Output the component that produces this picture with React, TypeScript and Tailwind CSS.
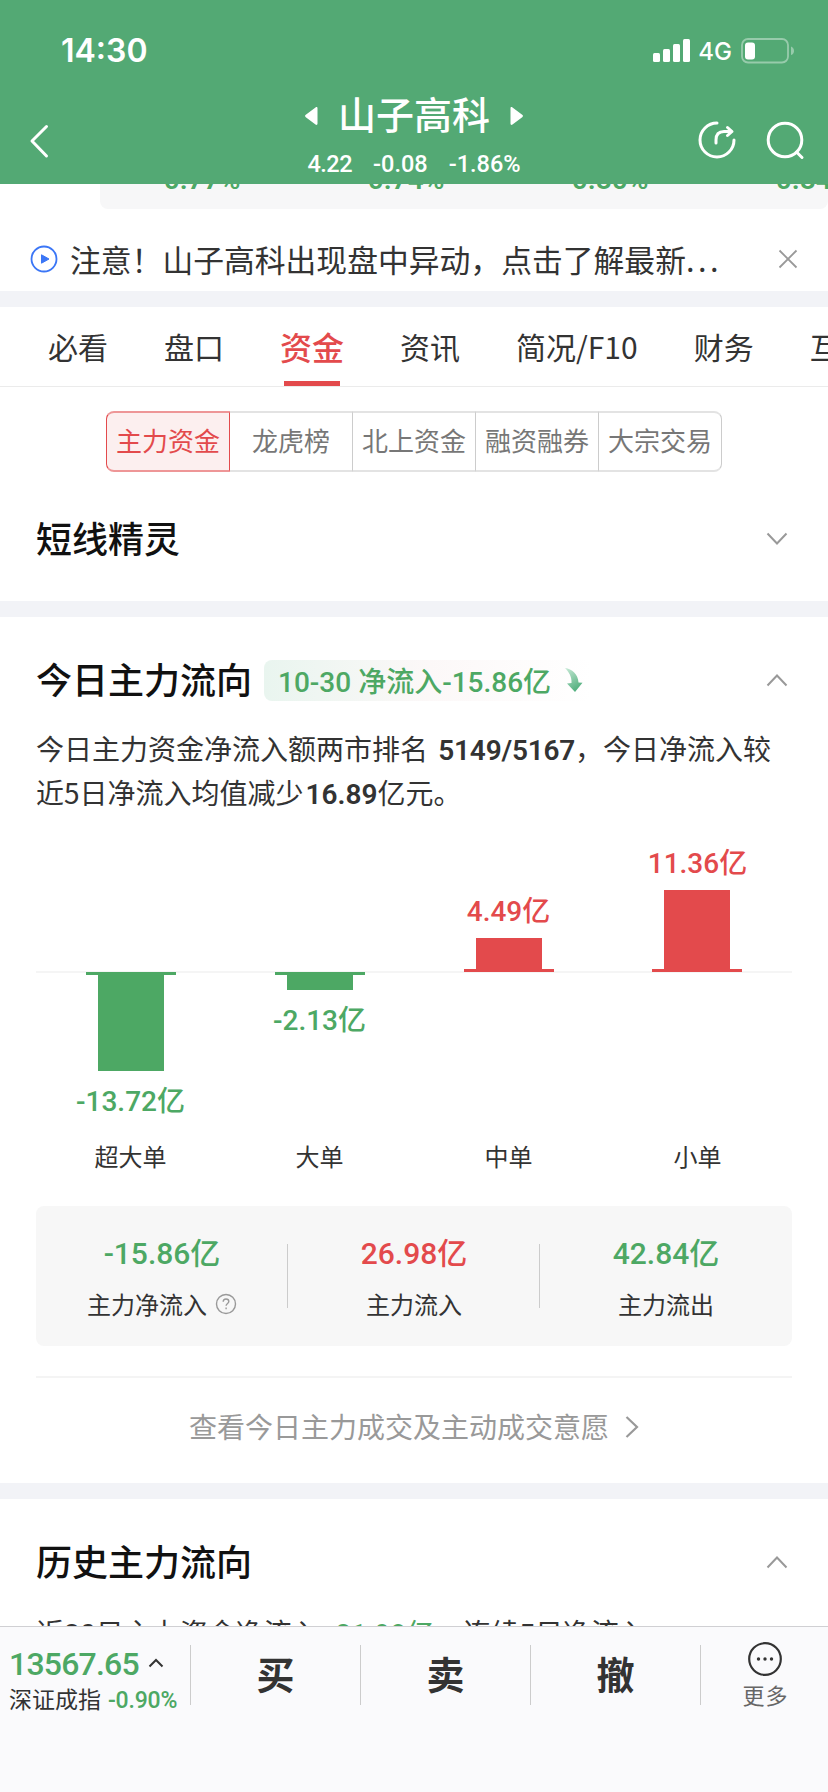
import type { ReactNode } from 'react';
import { clsx } from 'clsx';

const peers = ['0.77%', '0.74%', '0.80%', '0.84%'];

const tabs = ['必看', '盘口', '资金', '资讯', '简况/F10', '财务', '互动'];

const segments = ['主力资金', '龙虎榜', '北上资金', '融资融券', '大宗交易'];

const orders = [
  { name: '超大单', value: -13.72, size: 96.5 },
  { name: '大单', value: -2.13, size: 15.5 },
  { name: '中单', value: 4.49, size: 32 },
  { name: '小单', value: 11.36, size: 80 },
];

const summary = [
  { label: '主力净流入', value: '-15.86亿', up: false, help: true },
  { label: '主力流入', value: '26.98亿', up: true },
  { label: '主力流出', value: '42.84亿', up: false },
];

const actions = ['买', '卖', '撤'];

function Num({ children, className }: { children: ReactNode; className?: string }) {
  return (
    <span className={clsx("font-['Roboto','Noto_Sans_CJK_SC',sans-serif]", className)}>
      {children}
    </span>
  );
}

function Chevron({ down = false }: { down?: boolean }) {
  return (
    <svg width="22" height="14" viewBox="0 0 22 14" fill="none" stroke="#999" strokeWidth="2">
      <path d={down ? 'M1.5 1.5 11 11.5l9.5-10' : 'M1.5 12.5 11 2.5l9.5 10'} />
    </svg>
  );
}

function StatusBar() {
  return (
    <div className="flex h-[98px] items-center pt-[3px] pl-[61px] pr-[33px]">
      <span className="font-['Inter',sans-serif] text-[32px] leading-none font-semibold">14:30</span>
      <div className="ml-auto flex items-center">
        <svg width="38" height="24" viewBox="0 0 38 24" fill="#fff">
          <rect x="0" y="14" width="7" height="9" rx="1.5" />
          <rect x="10" y="10" width="7" height="13" rx="1.5" />
          <rect x="20" y="5" width="7" height="18" rx="1.5" />
          <rect x="30" y="0" width="7" height="23" rx="1.5" />
        </svg>
        <span className="ml-[7px] mt-0.5 font-['Inter',sans-serif] text-[24px] leading-none font-medium">4G</span>
        <svg className="ml-[9px]" width="54" height="26" viewBox="0 0 54 26" fill="none">
          <rect x="1" y="1" width="46" height="23.5" rx="6" stroke="#fff" strokeOpacity=".4" strokeWidth="1.8" />
          <rect x="4" y="4.5" width="10" height="17" rx="3" fill="#fff" />
          <path d="M50 8.5c2 .6 3 2.400 3 4.300s-1 3.700-3 4.300z" fill="#fff" fillOpacity=".4" />
        </svg>
      </div>
    </div>
  );
}

function Header() {
  return (
    <header className="h-[184px] shrink-0 bg-[#53a974] text-white">
      <StatusBar />
      <div className="flex h-[86px] pl-7 pr-[23px]">
        <svg className="mt-[25px]" width="24" height="36" viewBox="0 0 24 36" fill="none" stroke="#fff" strokeWidth="3" strokeLinecap="round" strokeLinejoin="round">
          <path d="M18.500 3.500 4 18l14.500 15" />
        </svg>
        <div className="ml-[253px] flex flex-col items-center">
          <div className="flex h-9 items-center gap-[20px]">
            <svg width="13" height="18" viewBox="0 0 13 18" fill="#fff">
              <path d="M.8 7.800 10.500.5c1.200-.8 2-.3 2 1v15c0 1.300-.8 1.800-2 1L.8 10.200c-1-.8-1-1.600 0-2.400z" />
            </svg>
            <h1 className="-mt-[6px] text-[38px] leading-none font-medium">山子高科</h1>
            <svg width="13" height="18" viewBox="0 0 13 18" fill="#fff">
              <path d="M12.200 7.800 2.500.5C1.300-.3.500.2.500 1.500v15c0 1.300.8 1.800 2 1l9.700-7.300c1-.8 1-1.600 0-2.400z" />
            </svg>
          </div>
          <Num className="mt-4 flex gap-[21px] text-[23.500px] leading-[28px] font-medium">
            <span className="tracking-[-0.500px]">4.22</span>
            <span>-0.08</span>
            <span>-1.86%</span>
          </Num>
        </div>
        <div className="mt-[22px] ml-auto flex gap-[28px]">
          <svg width="40" height="40" viewBox="0 0 40 40" fill="none" stroke="#fff" strokeWidth="3" strokeLinecap="round" strokeLinejoin="round">
            <path d="M20 3A17 17 0 1 0 37 20" />
            <path d="M19 23v-3c0-5.500 3-8.500 8-8.500h7" />
            <path d="m30.500 7.500 4.500 4-4.500 4" />
          </svg>
          <svg width="40" height="40" viewBox="0 0 40 40" fill="none" stroke="#fff" strokeWidth="3" strokeLinecap="round">
            <circle cx="20" cy="20" r="16.800" />
            <path d="m31.500 32 5.500 5.500" />
          </svg>
        </div>
      </div>
    </header>
  );
}

function Notice() {
  return (
    <div className="flex h-[82px] items-center pt-[18px] px-[30px]">
      <svg width="28" height="28" viewBox="0 0 28 28" fill="none">
        <circle cx="14" cy="14" r="12.500" stroke="#3b76f6" strokeWidth="1.800" />
        <path d="M11.500 9.800v8.400l7.500-4.200z" fill="#3b76f6" stroke="#3b76f6" strokeLinejoin="round" />
      </svg>
      <p className="ml-[12px] text-[30.800px] leading-none whitespace-nowrap text-[#333]">
        注意！山子高科出现盘中异动，点击了解最新<span className="tracking-[3.500px]">...</span>
      </p>
      <svg className="ml-auto" width="20" height="20" viewBox="0 0 20 20" stroke="#999" strokeWidth="1.800">
        <path d="m1.500 1.500 17 17M18.500 1.500l-17 17" />
      </svg>
    </div>
  );
}

function Tabs() {
  return (
    <nav className="flex h-[80px] gap-14 overflow-hidden border-b border-[#ebebeb] pl-12">
      {tabs.map((tab) => (
        <div
          key={tab}
          className={clsx(
            'flex shrink-0 flex-col items-center whitespace-nowrap',
            tab === '资金' ? 'text-[32px] font-medium text-[#e34a4c]' : 'text-[30px] text-[#333]',
          )}
        >
          <span className="h-[74px] leading-[78px]">{tab}</span>
          {tab === '资金' && <span className="h-[5px] w-14 bg-[#e34a4c]" />}
        </div>
      ))}
    </nav>
  );
}

function Segments() {
  return (
    <div className="mx-auto mt-6 flex h-[61px] w-[616px]">
      {segments.map((name, i) => (
        <div
          key={name}
          className={clsx(
            'flex flex-1 items-center justify-center border-y-2 pb-[3px] text-[26px] leading-none',
            i === 0
              ? 'rounded-l-[8px] border-x border-x-[#e34a4c] border-y-[#ee9697] bg-[#fcefef] text-[#e34a4c]'
              : 'border-r border-r-[#ccc] border-y-[#e3e3e3] text-[#777]',
            i === segments.length - 1 && 'rounded-r-[8px]',
          )}
        >
          {name}
        </div>
      ))}
    </div>
  );
}

function SectionHead({ title, down, children }: { title: string; down?: boolean; children?: ReactNode }) {
  return (
    <div className="flex h-[40px] items-center pl-9 pr-10">
      <h2 className="-mt-[5px] text-[36px] leading-none font-medium text-[#111]">{title}</h2>
      {children}
      <div className="ml-auto">
        <Chevron down={down} />
      </div>
    </div>
  );
}

function Divider() {
  return <div className="h-4 bg-[#f2f3f7]" />;
}

function FlowChart() {
  return (
    <div className="relative mx-9 flex h-[290px]">
      <div className="absolute top-[133px] left-0 h-0.5 w-full bg-[#f5f5f5]" />
      {orders.map(({ name, value, size }) => {
        const up = value > 0;
        const bar = <div className={clsx('w-[66px]', up ? 'bg-[#e34a4c]' : 'bg-[#4da864]')} style={{ height: size }} />;
        const base = <div className={clsx('-my-px h-[3px] w-[90px]', up ? 'bg-[#e34a4c]' : 'bg-[#4da864]')} />;
        const label = (
          <Num className={clsx('text-[28px] leading-8 font-medium', up ? 'mb-[10px] text-[#e34a4c]' : 'mt-[15px] text-[#4da864]')}>
            {value.toFixed(2)}亿
          </Num>
        );
        return (
          <div key={name} className="relative flex flex-1 flex-col items-center">
            <div className="flex h-[134px] flex-col items-center justify-end pb-px">{up && <>{label}{bar}{base}</>}</div>
            <div className="flex flex-1 flex-col items-center pt-px">{!up && <>{base}{bar}{label}</>}</div>
          </div>
        );
      })}
    </div>
  );
}

function Summary() {
  return (
    <div className="mx-9 mt-[32px] flex h-[140px] items-center rounded-[8px] bg-[#f7f7f7]">
      {summary.map(({ label, value, up, help }, i) => (
        <div key={label} className="flex flex-1 items-center">
          <div className="flex flex-1 flex-col items-center pt-[3px]">
            <Num className={clsx('text-[30px] leading-9 font-medium', up ? 'text-[#e34a4c]' : 'text-[#4da864]')}>{value}</Num>
            <div className="mt-[16px] flex items-center text-[24px] leading-8 text-[#333]">
              {label}
              {help && (
                <svg className="ml-2" width="22" height="22" viewBox="0 0 22 22" fill="none" stroke="#999" strokeWidth="1.400">
                  <circle cx="11" cy="11" r="9.500" />
                  <path d="M8.200 8.800c0-1.700 1.200-2.800 2.800-2.800s2.800 1 2.800 2.500c0 2-2.700 2.100-2.700 4.300M11.100 14.500v1.700" />
                </svg>
              )}
            </div>
          </div>
          {i < summary.length - 1 && <div className="-ml-px h-16 w-px bg-[#ccc]" />}
        </div>
      ))}
    </div>
  );
}

function TodayFlow() {
  return (
    <section className="h-[866px] pt-[43px]">
      <SectionHead title="今日主力流向">
        <div className="ml-3 flex h-[41px] w-[328px] items-center rounded-[8px] bg-linear-to-r from-[#e9f5ef] via-[#fcf8f8] to-white pl-[14px] whitespace-nowrap text-[#4da864]">
          <Num className="mt-[5px] text-[28px] leading-none font-medium">10-30 净流入-15.86亿</Num>
          <svg className="ml-[13px]" width="20" height="26" viewBox="0 0 20 26">
            <defs>
              <linearGradient id="fall" x1="0" y1="0" x2=".5" y2="1">
                <stop offset="0" stopColor="#c9ead7" />
                <stop offset="1" stopColor="#53b07f" />
              </linearGradient>
            </defs>
            <path d="M1 1c7 1 13 6 13.500 14.500l4 .3L11 25 3 16.500l4.500-.5C8 10 5 5 1 1z" fill="url(#fall)" />
          </svg>
        </div>
      </SectionHead>
      <p className="mt-[26px] pl-9 text-[28px] leading-[44px] whitespace-nowrap text-[#333]">
        今日主力资金净流入额两市排名 <Num className="ml-1 leading-none font-semibold tracking-[-0.200px]">5149/5167</Num>，今日净流入较
        <br />
        近5日净流入均值减少<Num className="ml-0.5 leading-none font-semibold">16.89</Num>亿元。
      </p>
      <div className="mt-[24px]">
        <FlowChart />
      </div>
      <div className="mx-9 mt-[10px] flex text-center text-[24px] leading-[36px] text-[#333]">
        {orders.map(({ name }) => (
          <span key={name} className="flex-1">{name}</span>
        ))}
      </div>
      <Summary />
      <div className="mx-9 mt-[30px] flex h-[101px] items-center justify-center gap-4 border-t-2 border-[#f4f4f4] text-[28px] leading-none text-[#999]">
        <span className="-mt-[4px]">查看今日主力成交及主动成交意愿</span>
        <svg className="-mt-0.5" width="14" height="24" viewBox="0 0 14 24" fill="none" stroke="#999" strokeWidth="2.200">
          <path d="M1.500 2 12 12 1.500 22" />
        </svg>
      </div>
    </section>
  );
}

function BottomBar() {
  return (
    <footer className="h-[166px] shrink-0 border-t border-[#d0d0d3] bg-[#fafafc]">
      <div className="flex h-[96px] items-center">
        <div className="w-[190px] pt-[11px] pl-[9px]">
          <div className="flex h-9 items-center text-[#4da864]">
            <Num className="mt-px text-[32px] leading-9 font-medium tracking-[-0.800px]">13567.65</Num>
            <svg className="ml-[9px]" width="16" height="10" viewBox="0 0 16 10" fill="none" stroke="#333" strokeWidth="2">
              <path d="M1.500 8.500 8 2l6.500 6.500" />
            </svg>
          </div>
          <div className="-mt-px text-[23px] leading-9 whitespace-nowrap text-[#333]">
            深证成指
            <Num className="ml-[7px] leading-none font-medium tracking-[-0.200px] text-[#4da864]">-0.90%</Num>
          </div>
        </div>
        {actions.map((name) => (
          <div key={name} className="flex h-[60px] w-[170px] items-center justify-center border-l border-[#ccc] pb-1 text-[38px] leading-none font-bold text-[#333]">
            {name}
          </div>
        ))}
        <div className="flex h-[60px] flex-1 items-center justify-center border-l border-[#ccc] pl-0.5">
          <div className="flex flex-col items-center text-[22px] leading-8 tracking-[1px] text-[#666]">
            <svg width="36" height="36" viewBox="0 0 36 36" fill="none">
              <circle cx="18" cy="18" r="15.800" stroke="#333" strokeWidth="2.200" />
              <g fill="#333">
                <circle cx="11.500" cy="18" r="1.700" />
                <circle cx="18" cy="18" r="1.700" />
                <circle cx="24.500" cy="18" r="1.700" />
              </g>
            </svg>
            <span className="mt-px">更多</span>
          </div>
        </div>
      </div>
    </footer>
  );
}

export default function App() {
  return (
    <div className="flex h-[1792px] w-[828px] flex-col overflow-hidden bg-white font-['Noto_Sans_CJK_SC',sans-serif]">
      <Header />
      <main className="flex-1 overflow-hidden">
        {/* last row of the peers panel, scrolled under the header */}
        <div className="ml-[100px] flex h-[25px] items-end overflow-hidden rounded-b-[8px] bg-[#f7f7f8] pb-[15px] text-[#4da864]">
          {peers.map((p) => (
            <Num key={p} className="w-[204px] shrink-0 text-center text-[28px] leading-7 font-semibold">{p}</Num>
          ))}
        </div>
        <Notice />
        <Divider />
        <Tabs />
        <Segments />
        <div className="h-[129px] pt-[47px]">
          <SectionHead title="短线精灵" down />
        </div>
        <Divider />
        <TodayFlow />
        <Divider />
        <section className="pt-[43px]">
          <SectionHead title="历史主力流向" />
          <p className="mt-[28px] pl-9 text-[28px] leading-[44px] whitespace-nowrap text-[#333]">
            近<Num className="leading-none font-medium">20</Num>日主力资金净流入
            <Num className="mr-px ml-2 leading-none text-[#4da864]">-21.98亿</Num>，连续<Num className="leading-none font-medium">5</Num>日净流入
          </p>
        </section>
      </main>
      <BottomBar />
    </div>
  );
}
